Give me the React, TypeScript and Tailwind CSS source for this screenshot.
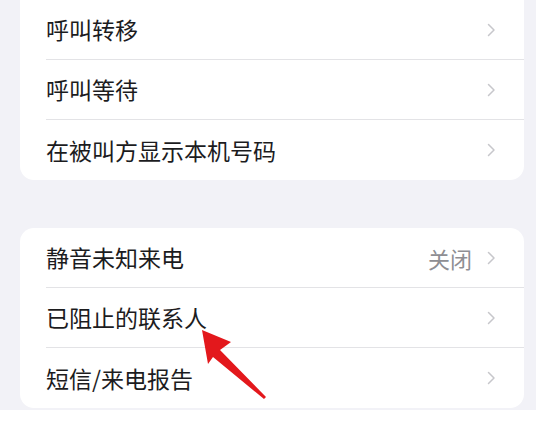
import React from 'react';

interface RowProps {
  label: string;
  value?: string;
  last?: boolean;
}

function Chevron() {
  return (
    <svg width="9" height="14" viewBox="0 0 9 14" className="mr-[28px] shrink-0">
      <path d="M1.5 1.5 L7 7 L1.5 12.5" fill="none" stroke="#c7c7cb" strokeWidth="1.5" strokeLinecap="round" strokeLinejoin="round" />
    </svg>
  );
}

function Row({ label, value, last }: RowProps) {
  return (
    <div className="flex h-[60px] items-stretch pl-[26px]">
      <div className={`flex flex-1 items-center ${last ? '' : 'border-b border-[#e3e3e6]'}`}>
        <span className="flex-1 text-[23px] leading-none text-[#1c1c1e]">{label}</span>
        {value && <span className="mr-[15px] text-[22px] leading-none text-[#8e8e93]">{value}</span>}
        <Chevron />
      </div>
    </div>
  );
}

export default function App() {
  return (
    <div
      className="h-[432px] w-[536px] overflow-hidden bg-white"
      style={{ fontFamily: '"Noto Sans CJK SC", "Noto Sans", sans-serif' }}
    >
      <div className="h-[410px] bg-[#f2f2f7] px-[20px] pr-[12px]">
        {/* first group, top cut off */}
        <div className="rounded-b-[14px] bg-white">
          <Row label="呼叫转移" />
          <Row label="呼叫等待" />
          <Row label="在被叫方显示本机号码" last />
        </div>

        <div className="relative mt-[48px] rounded-[14px] bg-white">
          <Row label="静音未知来电" value="关闭" />
          <Row label="已阻止的联系人" />
          <Row label="短信/来电报告" last />

          {/* red annotation arrow */}
          <svg className="pointer-events-none absolute left-[-20px] top-[-228px]" width="536" height="432" viewBox="0 0 536 432">
            <polygon points="202,330 231,342 220,350 266,397 264,399 213,357 208,364" fill="#e3181c" />
          </svg>
        </div>
      </div>
    </div>
  );
}
